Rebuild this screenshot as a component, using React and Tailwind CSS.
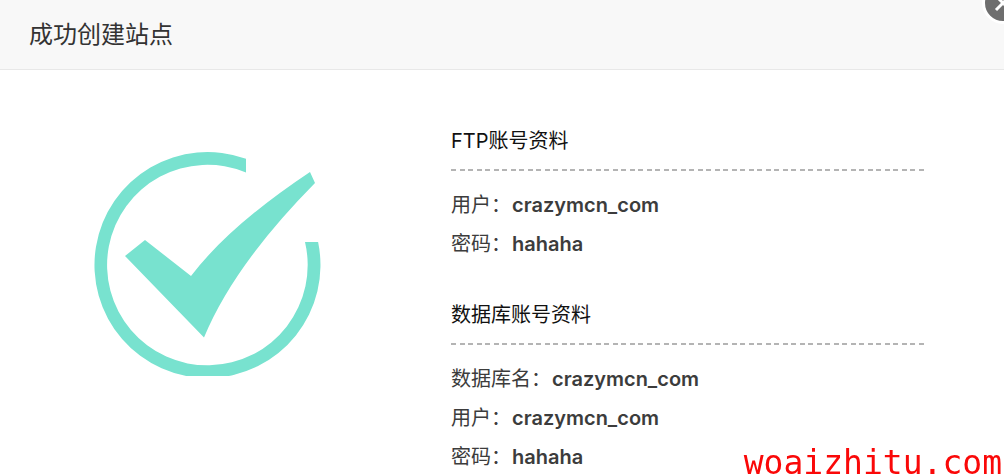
const sections = [
  {
    title: 'FTP账号资料',
    rows: [
      ['用户', 'crazymcn_com'],
      ['密码', 'hahaha'],
    ],
  },
  {
    title: '数据库账号资料',
    rows: [
      ['数据库名', 'crazymcn_com'],
      ['用户', 'crazymcn_com'],
      ['密码', 'hahaha'],
    ],
  },
];

function SuccessMark() {
  return (
    <svg viewBox="94 152 228 224" className="h-[224px] w-[228px] fill-[#78e2cf]" aria-hidden="true">
      <path d="M246 158.8A113 113 0 1 0 318.1 242L305 242A100.3 100.3 0 1 1 246 172.5Z" />
      <path d="M125 256L145 240L191 276Q229 226 310 172L315 183Q234 265 204 337.5Z" />
    </svg>
  );
}

function Section({ title, rows }) {
  return (
    <section>
      <h2 className="text-xl leading-10 text-[#111111]">{title}</h2>
      <div className="mt-2 h-[2px] bg-[repeating-linear-gradient(to_right,#b4b4b4_0_5px,transparent_5px_9px,#b4b4b4_9px_14px,transparent_14px_17px)]" />
      <dl className="mt-[15px]">
        {rows.map(([label, value]) => (
          <div key={label} className="flex gap-px text-xl leading-[39px] text-[#3c3c3c]">
            <dt>{label}：</dt>
            <dd className="font-semibold">{value}</dd>
          </div>
        ))}
      </dl>
    </section>
  );
}

export default function App() {
  return (
    <div className="relative overflow-hidden bg-white font-['Inter','Noto_Sans_CJK_SC',sans-serif]">
      <header className="border-b border-[#e8e8e8] bg-[#f8f8f8] px-[29px]">
        <h1 className="text-2xl leading-[69px] text-[#333333]">成功创建站点</h1>
      </header>
      <button
        type="button"
        aria-label="关闭"
        className="absolute -top-[18px] -right-[20px] flex size-[42px] items-center justify-center rounded-full border-3 border-white bg-[#6e6e6e]"
      >
        <svg viewBox="0 0 20 20" className="size-5 fill-none stroke-white stroke-3" aria-hidden="true">
          <path d="M3 3L17 17M17 3L3 17" />
        </svg>
      </button>
      <main className="flex pt-[51px] pr-20 pl-[94px]">
        <div className="mr-[129px] shrink-0 pt-[31px]">
          <SuccessMark />
        </div>
        <div className="flex grow flex-col gap-[31px]">
          {sections.map((s) => (
            <Section key={s.title} {...s} />
          ))}
        </div>
      </main>
      <p className="fixed right-[2px] -bottom-2 font-['DejaVu_Sans_Mono',monospace] text-[33px] leading-10 text-[#fa0808]">
        woaizhitu.com
      </p>
    </div>
  );
}
